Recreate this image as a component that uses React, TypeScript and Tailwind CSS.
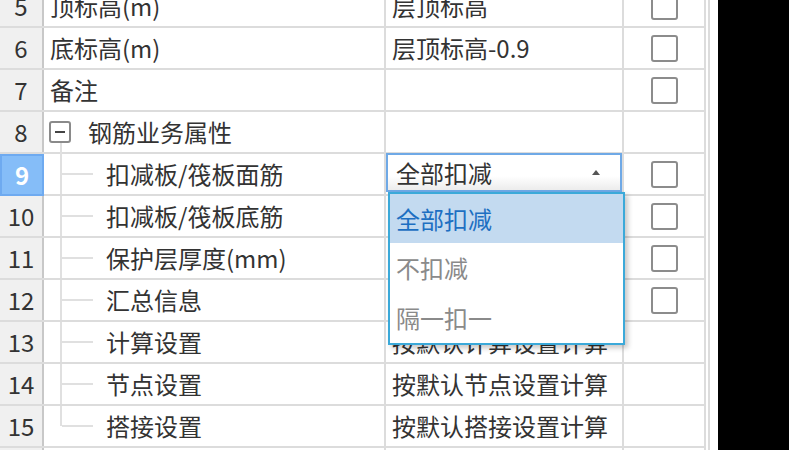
import React from "react";

type Row = {
  n: number;
  name: string;
  value?: string;
  check: boolean;
  kind: "plain" | "group" | "child" | "last" | "empty";
};

const rows: Row[] = [
  { n: 5, name: "顶标高(m)", value: "层顶标高", check: true, kind: "plain" },
  { n: 6, name: "底标高(m)", value: "层顶标高-0.9", check: true, kind: "plain" },
  { n: 7, name: "备注", value: "", check: true, kind: "plain" },
  { n: 8, name: "钢筋业务属性", value: "", check: false, kind: "group" },
  { n: 9, name: "扣减板/筏板面筋", value: "", check: true, kind: "child" },
  { n: 10, name: "扣减板/筏板底筋", value: "", check: true, kind: "child" },
  { n: 11, name: "保护层厚度(mm)", value: "", check: true, kind: "child" },
  { n: 12, name: "汇总信息", value: "", check: true, kind: "child" },
  { n: 13, name: "计算设置", value: "按默认计算设置计算", check: false, kind: "child" },
  { n: 14, name: "节点设置", value: "按默认节点设置计算", check: false, kind: "child" },
  { n: 15, name: "搭接设置", value: "按默认搭接设置计算", check: false, kind: "last" },
  { n: 16, name: "", value: "", check: false, kind: "empty" },
];

function Checkbox() {
  return <div className="w-[27px] h-[27px] border-2 border-[#8c8c8c] rounded-[3px] bg-white" />;
}

function NameCell({ row }: { row: Row }) {
  if (row.kind === "group") {
    return (
      <div className="flex items-center h-full pl-[5px]">
        <div className="relative w-[22px] h-[22px] border-2 border-[#8a8a8a] rounded-[3px] flex items-center justify-center bg-white">
          <div className="w-[10px] h-[2px] bg-[#444]" />
          <div className="absolute left-[9px] top-[20px] w-[2px] h-[12px] bg-[#e0e0e0]" />
        </div>
        <span className="ml-[17px]">{row.name}</span>
      </div>
    );
  }
  if (row.kind === "child" || row.kind === "last") {
    return (
      <div className="flex items-center h-full pl-[16px]">
        <div className="self-stretch w-[2px] flex flex-col">
          <div className="flex-1 bg-[#e0e0e0]" />
          <div className={row.kind === "last" ? "flex-1" : "flex-1 bg-[#e0e0e0]"} />
        </div>
        <div className="w-[31px] h-[2px] bg-[#e0e0e0]" />
        <span className="ml-[13px]">{row.name}</span>
      </div>
    );
  }
  return <div className="flex items-center h-full pl-[6px]">{row.name}</div>;
}

function Combo() {
  return (
    <div className="absolute left-0 right-0 top-[-1px] h-[39px] border-2 border-[#6fa9e6] bg-gradient-to-b from-white from-60% to-[#ececec] flex items-center pl-[8px] pr-[20px] z-10">
      <span className="flex-1">全部扣减</span>
      <div className="w-0 h-0 border-l-[4px] border-r-[4px] border-b-[5px] border-l-transparent border-r-transparent border-b-[#555]" />
      <div className="absolute left-[0px] top-[37px] w-[237px] h-[153px] border-2 border-[#3ba9d9] bg-white shadow-[3px_3px_5px_rgba(0,0,0,0.22)] flex flex-col">
        <div className="h-[49px] bg-[#c3daf0] text-[#1d6fc2] flex items-center pl-[6px]">全部扣减</div>
        <div className="h-[50px] text-[#8a8a8a] flex items-center pl-[6px]">不扣减</div>
        <div className="h-[50px] text-[#8a8a8a] flex items-center pl-[6px]">隔一扣一</div>
      </div>
    </div>
  );
}

export default function App() {
  return (
    <div className="w-[789px] h-[450px] bg-black flex overflow-hidden font-['Noto_Sans_CJK_SC','Noto_Sans',sans-serif] text-[24px] text-[#333] leading-none">
      <div className="w-[718px] h-full bg-white flex overflow-hidden">
        <div className="w-[706px] flex flex-col -mt-[14px]">
          {rows.map((row) => {
            const sel = row.n === 9;
            return (
              <div key={row.n} className="h-[42px] shrink-0 flex border-b-2 border-[#dcdcdc]">
                <div
                  className={
                    sel
                      ? "w-[44px] h-[42px] -mb-[2px] -mt-[0px] bg-[#85bdf8] border-2 border-[#6eaaf0] text-white font-bold flex items-center justify-center relative z-[1]"
                      : "w-[44px] bg-[#f0f0f0] border-r-2 border-[#c8c8c8] flex items-center justify-center"
                  }
                >
                  {row.kind === "empty" ? "" : row.n}
                </div>
                <div className="w-[342px] border-r-2 border-[#dcdcdc]">
                  <NameCell row={row} />
                </div>
                <div className="w-[238px] border-r-2 border-[#dcdcdc] relative flex items-center pl-[6px]">
                  {sel ? <Combo /> : row.value}
                </div>
                <div className="w-[82px] border-r-2 border-[#dcdcdc] flex items-center justify-center">
                  {row.check ? <Checkbox /> : null}
                </div>
              </div>
            );
          })}
        </div>
        <div className="w-[2px] h-full bg-white" />
        <div className="w-[2px] h-full bg-[#dcdcdc]" />
      </div>
    </div>
  );
}
